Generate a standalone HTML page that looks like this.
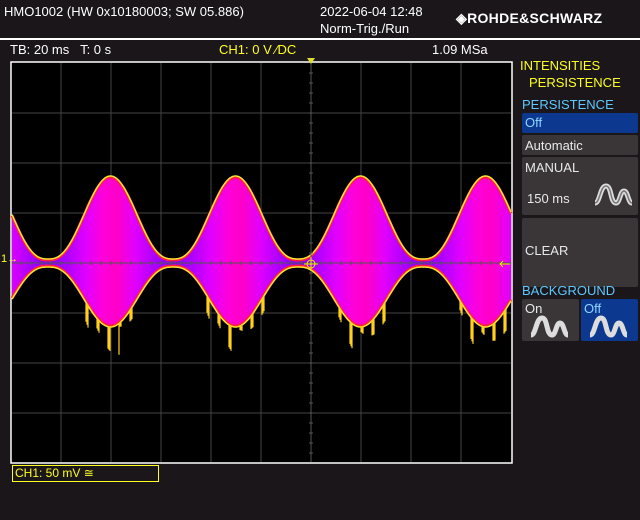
<!DOCTYPE html>
<html><head><meta charset="utf-8"><style>
body{margin:0;width:640px;height:520px;background:#1a1619;font-family:"Liberation Sans",sans-serif;overflow:hidden;position:relative;color:#fff}
.t{position:absolute;white-space:nowrap;font-size:13px}
.y{color:#ffff1e}.b{color:#5ec8ff}
.btn{position:absolute;left:522px;width:116px;background:#3a3637;color:#e8e8e8;font-size:13px;border-radius:2px}
</style></head><body>
<div class="t" style="left:4px;top:4px">HMO1002 (HW 0x10180003; SW 05.886)</div>
<div class="t" style="left:320px;top:4px">2022-06-04 12:48</div>
<div class="t" style="left:320px;top:21px">Norm-Trig./Run</div>
<div class="t" style="left:456px;top:10px;font-weight:bold;font-size:14px;letter-spacing:0.3px">◈ROHDE&amp;SCHWARZ</div>
<div style="position:absolute;left:0;top:38px;width:640px;height:2px;background:#fff"></div>
<div class="t" style="left:10px;top:42px">TB: 20 ms&nbsp;&nbsp;&nbsp;T: 0 s</div>
<div class="t y" style="left:219px;top:42px">CH1: 0 V ⁄DC</div>
<div class="t" style="left:432px;top:42px">1.09 MSa</div>
<div class="t y" style="left:520px;top:58px">INTENSITIES</div>
<div class="t y" style="left:529px;top:75px">PERSISTENCE</div>
<div class="t b" style="left:522px;top:97px">PERSISTENCE</div>
<div class="btn" style="top:113px;height:20px;background:#0c3890;color:#8fd4ff;padding-left:3px;box-sizing:border-box;line-height:20px">Off</div>
<div class="btn" style="top:135px;height:20px;padding-left:3px;box-sizing:border-box;line-height:22px">Automatic</div>
<div class="btn" style="top:157px;height:58px;padding:3px;box-sizing:border-box">MANUAL<br><span style="position:relative;top:16px;left:2px">150 ms</span>
<svg style="position:absolute;left:70px;top:26px" width="42" height="24"><path d="M3 20 C8 20 8 3 14 3 C20 3 18 20 24 20 C28 20 28 8 32 8 C36 8 36 20 40 20" stroke="#ddd" stroke-width="5" fill="none"/><path d="M3 20 C8 20 8 3 14 3 C20 3 18 20 24 20 C28 20 28 8 32 8 C36 8 36 20 40 20" stroke="#777" stroke-width="1.5" fill="none"/></svg></div>
<div class="btn" style="top:218px;height:69px;padding:3px;box-sizing:border-box;line-height:60px">CLEAR</div>
<div class="t b" style="left:522px;top:283px">BACKGROUND</div>
<div class="btn" style="top:299px;width:57px;height:42px;padding:2px 3px;box-sizing:border-box">On
<svg style="position:absolute;left:6px;top:16px" width="44" height="24"><path d="M3 20 C8 20 8 3 14 3 C20 3 18 20 24 20 C28 20 28 8 32 8 C36 8 36 20 40 20" stroke="#ddd" stroke-width="5" fill="none"/></svg></div>
<div class="btn" style="left:581px;top:299px;width:57px;height:42px;padding:2px 3px;box-sizing:border-box;background:#0c3890;color:#8fd4ff">Off
<svg style="position:absolute;left:6px;top:16px" width="44" height="24"><path d="M3 20 C8 20 8 3 14 3 C20 3 18 20 24 20 C28 20 28 8 32 8 C36 8 36 20 40 20" stroke="#ddd" stroke-width="5" fill="none"/></svg></div>
<svg id="sc" style="position:absolute;left:0;top:0" width="640" height="520"></svg>
<div class="t y" style="left:12px;top:465px;width:143px;height:15px;border:1px solid #ffff1e;font-size:12px;line-height:15px;padding-left:2px">CH1: 50 mV ≅</div>
<div class="t y" style="left:1px;top:253px;font-size:11px">1→</div>
<script>
(function(){
var s='<defs><linearGradient id="g" gradientUnits="userSpaceOnUse" x1="48" y1="0" x2="173" y2="0" spreadMethod="repeat">'+
'<stop offset="0" stop-color="#7a00ff"/><stop offset="0.3" stop-color="#e000ff"/><stop offset="0.45" stop-color="#ff00d8"/><stop offset="0.55" stop-color="#ff00c8"/><stop offset="0.7" stop-color="#e000ff"/><stop offset="1" stop-color="#7a00ff"/></linearGradient></defs>';
s+='<rect x="11" y="62" width="501" height="401" fill="#000" stroke="#fff" stroke-width="1.5"/>';
for(var i=1;i<10;i++)s+='<line x1="'+(11+50*i)+'" y1="63" x2="'+(11+50*i)+'" y2="462" stroke="#444"/>';
for(var j=1;j<8;j++)s+='<line x1="12" y1="'+(63+50*j)+'" x2="511" y2="'+(63+50*j)+'" stroke="#444"/>';
var up='',dn='',sp='';
var pts=[];
for(var x=12;x<=511;x++){
 var a=Math.pow(Math.sin(Math.PI*(x-48)/125),2);a=Math.pow(a,1.3);
 var yt=263-4-83*a, yb=263+4+60*a;
 pts.push([x,yt,yb]);
 if(a>0.45 && (x*7919)%11<3){var L=4+((x*31)%30)*a;sp+='M'+x+' '+yb.toFixed(1)+'v'+L.toFixed(1);}
}
var d='M'+pts.map(function(p){return p[0]+' '+p[1].toFixed(1);}).join('L');
for(var k=pts.length-1;k>=0;k--)d+='L'+pts[k][0]+' '+pts[k][2].toFixed(1);
d+='Z';
s+='<path d="'+d+'" fill="url(#g)"/>';
var t='M'+pts.map(function(p){return p[0]+' '+p[1].toFixed(1);}).join('L');
var b='M'+pts.map(function(p){return p[0]+' '+p[2].toFixed(1);}).join('L');
s+='<path d="'+t+'" stroke="#ff2040" stroke-width="3" fill="none" transform="translate(0,1)"/><path d="'+t+'" stroke="#ffe830" stroke-width="1.5" fill="none"/>';
s+='<path d="'+b+'" stroke="#ff2040" stroke-width="3" fill="none" transform="translate(0,-1)"/><path d="'+b+'" stroke="#ffe830" stroke-width="1.5" fill="none"/>';
s+='<path d="'+sp+'" stroke="#ffd020" stroke-width="1.2"/>';
s+='<line x1="12" y1="263" x2="511" y2="263" stroke="#555"/><line x1="311" y1="63" x2="311" y2="462" stroke="#555"/>';
var tk='';for(var x2=21;x2<511;x2+=10)tk+='M'+x2+' 261v4';for(var y2=73;y2<463;y2+=10)tk+='M309 '+y2+'h4';
s+='<path d="'+tk+'" stroke="#555"/>';
s+='<circle cx="311" cy="264" r="4" stroke="#ee0" fill="none"/><path d="M304 264h14M311 257v14" stroke="#ee0"/>';
s+='<path d="M500 264h10M503 261l-3 3 3 3" stroke="#ee0" fill="none"/>';
s+='<polygon points="307,58 315,58 311,64" fill="#dddd30"/>';
document.getElementById('sc').innerHTML=s;
})();
</script>
</body></html>
